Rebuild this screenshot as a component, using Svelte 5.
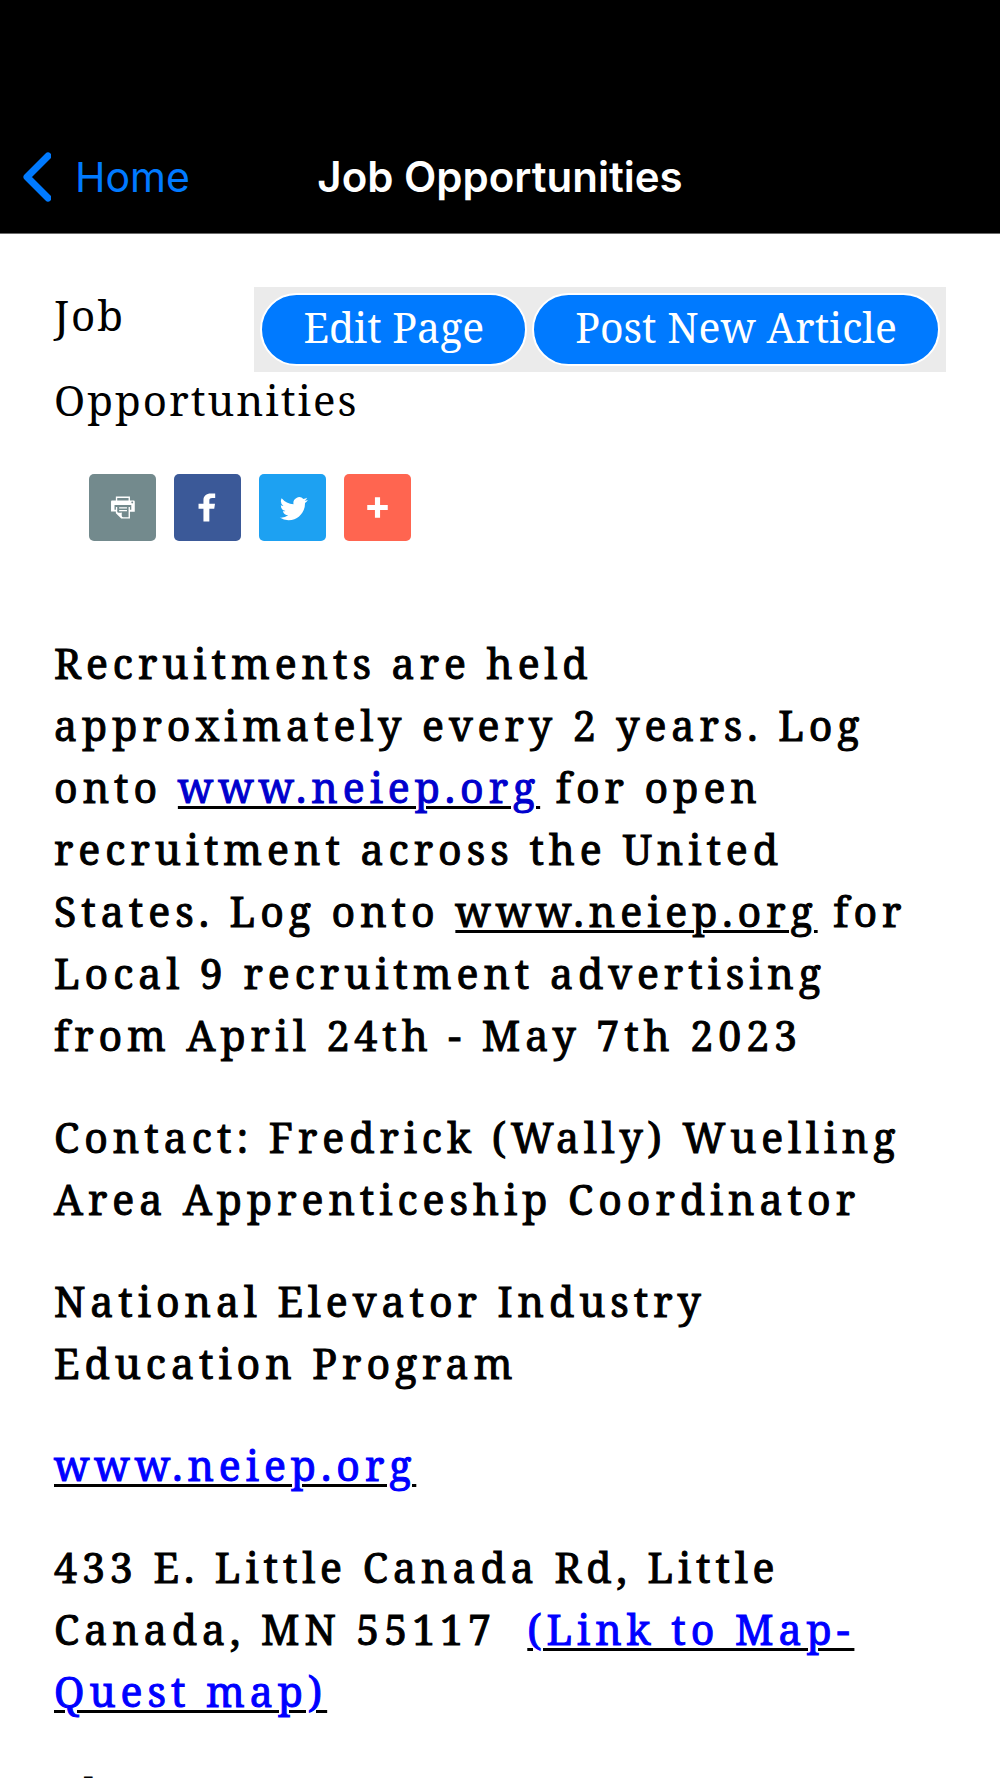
<script>
    const titleWords = ['Job', 'Opportunities'];

    const shares = [
        {
            name: 'Print',
            color: '#738a8d',
            icon: 'M24.67 10.62h-2.86V7.49H10.82v3.12H7.95c-.5 0-.9.4-.9.9v7.66h3.77v1.31L15 24.66h6.81v-5.44h3.77v-7.7c-.01-.5-.41-.9-.91-.9zM11.88 8.56h8.86v2.06h-8.86V8.56zm10.98 9.18h-1.05v-2.1h-1.06v7.96H16.4c-1.58 0-.82-3.74-.82-3.74s-3.65.89-3.69-.78v-3.43h-1.06v2.06H9.77v-3.58h13.09v3.61zm.75-4.91c-.4 0-.72-.32-.72-.72 0-.4.32-.72.72-.72.4 0 .72.32.72.72 0 .4-.32.72-.72.72zm-4.12 2.96h-6.1v1.06h6.1v-1.06zm-6.11 3.15h6.1v-1.06h-6.1v1.06z'
        },
        {
            name: 'Facebook',
            color: '#3b5998',
            icon: 'M22 5.16c-.406-.054-1.806-.16-3.43-.16-3.4 0-5.733 1.825-5.733 5.17v2.882H9v3.913h3.837V27h4.604V16.965h3.823l.587-3.913h-4.41v-2.5c0-1.123.347-1.903 2.198-1.903H22V5.16z'
        },
        {
            name: 'Twitter',
            color: '#1da1f2',
            icon: 'M27.996 10.116c-.81.36-1.68.602-2.592.71a4.526 4.526 0 0 0 1.984-2.496 9.037 9.037 0 0 1-2.866 1.095 4.513 4.513 0 0 0-7.69 4.116 12.81 12.81 0 0 1-9.3-4.715 4.49 4.49 0 0 0-.612 2.27 4.51 4.51 0 0 0 2.008 3.755 4.495 4.495 0 0 1-2.044-.564v.057a4.515 4.515 0 0 0 3.62 4.425 4.52 4.52 0 0 1-2.04.077 4.517 4.517 0 0 0 4.217 3.134 9.055 9.055 0 0 1-5.604 1.93A9.18 9.18 0 0 1 6 23.85a12.773 12.773 0 0 0 6.918 2.027c8.3 0 12.84-6.876 12.84-12.84 0-.195-.005-.39-.014-.583a9.172 9.172 0 0 0 2.252-2.336'
        },
        {
            name: 'More',
            color: '#ff6550',
            icon: 'M18 14V8h-4v6H8v4h6v6h4v-6h6v-4h-6z'
        }
    ];
</script>

<style>
    :global(body) {
        margin: 0;
        background: white;
    }
    .screen {
        color: black;
        font-family: 'Noto Serif', 'Droid Serif', 'DejaVu Serif Condensed', 'DejaVu Serif', serif;
    }

    .navbar {
        display: grid;
        grid-template-columns: 1fr auto 1fr;
        align-items: center;
        padding: 120px 23px 0;
        height: 113px;
        border-bottom: 1px solid #6b6b6b;
        background: black;
        color: white;
        font-family: Inter, 'Liberation Sans', sans-serif;
        font-size: 41px;
    }
    .back {
        display: flex;
        align-items: center;
        gap: 24px;
        color: #007aff;
        text-decoration: none;
    }
    .navbar-title {
        margin: 0;
        font-size: 42px;
        font-weight: 600;
    }

    .content {
        padding: 53px 54px 0;
    }
    .page-title {
        margin: 0;
        font-size: 42px;
        font-weight: 400;
        line-height: 56px;
        letter-spacing: 2px;
    }
    .actions {
        float: right;
        display: flex;
        gap: 5px;
        padding: 6px;
        background: #ebebeb;
    }
    .actions button {
        padding: 0 41px 6px;
        height: 73px;
        border: 2px solid white;
        border-radius: 37px;
        background: #007aff;
        color: white;
        font-family: inherit;
        font-size: 41px;
    }

    .shares {
        clear: both;
        display: flex;
        gap: 18px;
        padding: 46px 35px 0;
    }
    .share {
        display: flex;
        align-items: center;
        justify-content: center;
        width: 67px;
        height: 67px;
        border-radius: 5px;
    }

    .article {
        padding-top: 91px;
        font-size: 41px;
        font-weight: 400;
        line-height: 62px;
        letter-spacing: 5px;
        -webkit-text-stroke: 1px;
    }
    .article p {
        margin: 0 0 40px;
    }
    .article a {
        color: #0000ff;
        text-decoration: underline 3px black;
        text-underline-offset: 3px;
    }
    .article .visited {
        color: #0000cd;
    }
    .article .plain {
        color: black;
    }
</style>

<div class='screen'>
    <header class='navbar'>
        <a class='back' href='#home'>
            <svg width='28' height='50' viewBox='0 0 28 50' fill='none' stroke='currentColor' stroke-width='7' stroke-linecap='round' stroke-linejoin='round' aria-hidden='true'><path d='M25 4L4 25L25 46' /></svg>
            Home
        </a>
        <h1 class='navbar-title'>Job Opportunities</h1>
    </header>

    <main class='content'>
        <div class='actions'>
            <button type='button'>Edit Page</button>
            <button type='button'>Post New Article</button>
        </div>
        <h2 class='page-title'>
            {#each titleWords as word}
                <span>{word}</span>{' '}
            {/each}
        </h2>

        <div class='shares'>
            {#each shares as share}
                <a class='share' href='#share' aria-label={share.name} style='background: {share.color}'>
                    <svg width='41' height='41' viewBox='0 0 32 32' fill='white' fill-rule='evenodd' aria-hidden='true'><path d={share.icon} /></svg>
                </a>
            {/each}
        </div>

        <div class='article'>
            <p>
                Recruitments are held<br>
                approximately every 2 years. Log<br>
                onto <a class='visited' href='#neiep'>www.neiep.org</a> for open<br>
                recruitment across the United<br>
                States. Log onto <a class='plain' href='#neiep'>www.neiep.org</a> for<br>
                Local 9 recruitment advertising<br>
                from April 24th - May 7th 2023
            </p>
            <p>
                Contact: Fredrick (Wally) Wuelling<br>
                Area Apprenticeship Coordinator
            </p>
            <p>
                National Elevator Industry<br>
                Education Program
            </p>
            <p><a href='#neiep'>www.neiep.org</a></p>
            <p>
                433 E. Little Canada Rd, Little<br>
                Canada, MN 55117&nbsp; <a href='#map'>(Link to Map-<br>Quest map)</a>
            </p>
            <p>Phone:</p>
        </div>
    </main>
</div>
